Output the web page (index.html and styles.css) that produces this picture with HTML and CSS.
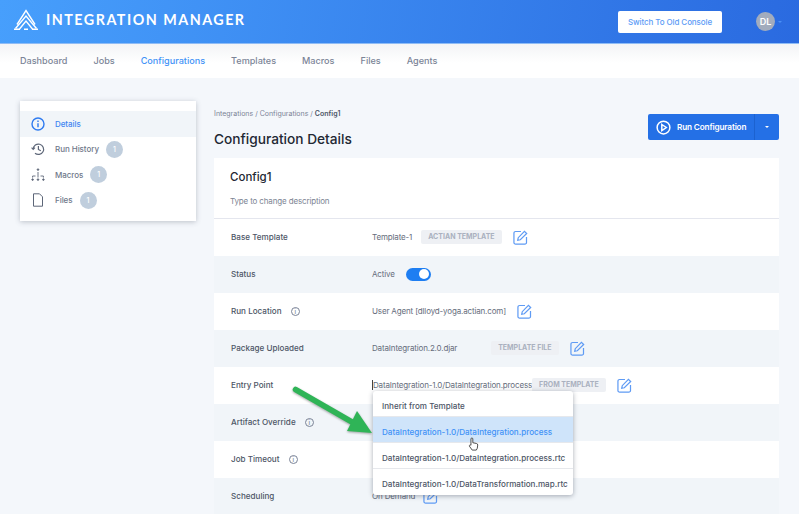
FILE: index.html
```html
<!DOCTYPE html>
<html lang="en">
<head>
    <meta charset="UTF-8">
    <title>Integration Manager</title>
    <link rel="stylesheet" href="styles.css">
</head>
<body>
    <header class="topbar">
        <div class="brand">
            <svg class="logo" width="24" height="21" viewBox="0 0 24 21" fill="none" stroke="#fff" stroke-width="1.4">
                <path d="M3 15.5 L12 1.5 L21 15.5"/>
                <path d="M1.5 19.5 L12 7 L22.5 19.5"/>
                <path d="M5.5 20 L12 12 L18.5 20"/>
                <path d="M0 20.2 H6 M18 20.2 H24 M10 20.2 H14"/>
            </svg>
            <span class="brand-name">INTEGRATION MANAGER</span>
        </div>
        <div class="top-right">
            <button class="old-console">Switch To Old Console</button>
            <div class="avatar">DL</div>
            <span class="caret caret-blue"></span>
        </div>
    </header>
    <nav class="tabs">
        <a>Dashboard</a>
        <a>Jobs</a>
        <a class="active">Configurations</a>
        <a>Templates</a>
        <a>Macros</a>
        <a>Files</a>
        <a>Agents</a>
    </nav>
    <div class="page">
        <aside class="side">
            <div class="side-item current">
                <svg width="14" height="14" viewBox="0 0 14 14" fill="none" stroke="#2f7bf0" stroke-width="1.4">
                    <circle cx="7" cy="7" r="6"/>
                    <path d="M7 6.2 V10.2 M7 3.6 V5"/>
                </svg>
                <span>Details</span>
            </div>
            <div class="side-item">
                <svg width="14" height="14" viewBox="0 0 14 14" fill="none" stroke="#5d6678" stroke-width="1.2">
                    <path d="M2.2 7 A5.2 5.2 0 1 1 4 11.2"/>
                    <path d="M0.6 5.6 L2.2 7.4 L3.9 5.6"/>
                    <path d="M7.4 4 V7.4 L9.8 8.8"/>
                </svg>
                <span>Run History</span>
                <b class="count">1</b>
            </div>
            <div class="side-item">
                <svg width="14" height="14" viewBox="0 0 14 14" fill="#5d6678" stroke="#5d6678" stroke-width="0.9">
                    <circle cx="7" cy="1.6" r="0.8"/>
                    <circle cx="1.6" cy="11.6" r="0.8"/>
                    <circle cx="7" cy="11.6" r="0.8"/>
                    <circle cx="12.4" cy="11.6" r="0.8"/>
                    <path d="M7 4 V9.5 M1.6 9.6 V8 H4.5 M12.4 9.6 V8 H9.5" fill="none"/>
                </svg>
                <span>Macros</span>
                <b class="count">1</b>
            </div>
            <div class="side-item">
                <svg width="14" height="14" viewBox="0 0 14 14" fill="none" stroke="#5d6678" stroke-width="1">
                    <path d="M2.5 0.8 H8.5 L11.5 3.8 V13.2 H2.5 Z"/>
                </svg>
                <span>Files</span>
                <b class="count">1</b>
            </div>
        </aside>
        <main class="main">
            <div class="main-head">
                <div>
                    <div class="crumbs">Integrations / Configurations / <strong>Config1</strong></div>
                    <h1>Configuration Details</h1>
                </div>
                <div class="run-btn">
                    <span class="run-label">
                        <svg width="15" height="15" viewBox="0 0 16 16" fill="none" stroke="#fff" stroke-width="1.6">
                            <circle cx="8" cy="8" r="6.8"/>
                            <path d="M6.2 4.8 L11 8 L6.2 11.2 Z"/>
                        </svg>
                        Run Configuration
                    </span>
                    <span class="run-more"><span class="caret"></span></span>
                </div>
            </div>
            <section class="card">
                <div class="card-title">
                    <h2>Config1</h2>
                    <p>Type to change description</p>
                </div>
                <div class="row">
                    <div class="label">Base Template</div>
                    <div class="value">
                        <span>Template-1</span>
                        <span class="tag tag-actian">ACTIAN TEMPLATE</span>
                        <svg class="edit" width="15" height="15" viewBox="0 0 16 16" fill="none" stroke="#5f9bf4" stroke-width="1.3"><path d="M8.5 1.6 H2.8 A1.8 1.8 0 0 0 1 3.4 V13.2 A1.8 1.8 0 0 0 2.8 15 H12.6 A1.8 1.8 0 0 0 14.4 13.2 V7.5"/><path d="M5 11 L5.6 8.2 L12.2 1.4 L14.6 3.7 L7.8 10.4 Z"/></svg>
                    </div>
                </div>
                <div class="row">
                    <div class="label">Status</div>
                    <div class="value">
                        <span>Active</span>
                        <span class="switch"><i></i></span>
                    </div>
                </div>
                <div class="row">
                    <div class="label">Run Location <span class="hint">i</span></div>
                    <div class="value">
                        <span>User Agent [dlloyd-yoga.actian.com]</span>
                        <svg class="edit" width="15" height="15" viewBox="0 0 16 16" fill="none" stroke="#5f9bf4" stroke-width="1.3"><path d="M8.5 1.6 H2.8 A1.8 1.8 0 0 0 1 3.4 V13.2 A1.8 1.8 0 0 0 2.8 15 H12.6 A1.8 1.8 0 0 0 14.4 13.2 V7.5"/><path d="M5 11 L5.6 8.2 L12.2 1.4 L14.6 3.7 L7.8 10.4 Z"/></svg>
                    </div>
                </div>
                <div class="row">
                    <div class="label">Package Uploaded</div>
                    <div class="value">
                        <span>DataIntegration.2.0.djar</span>
                        <span class="tag tag-file">TEMPLATE FILE</span>
                        <svg class="edit" width="15" height="15" viewBox="0 0 16 16" fill="none" stroke="#5f9bf4" stroke-width="1.3"><path d="M8.5 1.6 H2.8 A1.8 1.8 0 0 0 1 3.4 V13.2 A1.8 1.8 0 0 0 2.8 15 H12.6 A1.8 1.8 0 0 0 14.4 13.2 V7.5"/><path d="M5 11 L5.6 8.2 L12.2 1.4 L14.6 3.7 L7.8 10.4 Z"/></svg>
                    </div>
                </div>
                <div class="row">
                    <div class="label">Entry Point</div>
                    <div class="value">
                        <span class="typing">DataIntegration-1.0/DataIntegration.process</span>
                        <span class="tag tag-from">FROM TEMPLATE</span>
                        <svg class="edit" width="15" height="15" viewBox="0 0 16 16" fill="none" stroke="#5f9bf4" stroke-width="1.3"><path d="M8.5 1.6 H2.8 A1.8 1.8 0 0 0 1 3.4 V13.2 A1.8 1.8 0 0 0 2.8 15 H12.6 A1.8 1.8 0 0 0 14.4 13.2 V7.5"/><path d="M5 11 L5.6 8.2 L12.2 1.4 L14.6 3.7 L7.8 10.4 Z"/></svg>
                    </div>
                </div>
                <div class="row">
                    <div class="label">Artifact Override <span class="hint">i</span></div>
                </div>
                <div class="row">
                    <div class="label">Job Timeout <span class="hint">i</span></div>
                </div>
                <div class="row">
                    <div class="label">Scheduling</div>
                    <div class="value">
                        <span>On Demand</span>
                        <svg class="edit edit-sched" width="15" height="15" viewBox="0 0 16 16" fill="none" stroke="#5f9bf4" stroke-width="1.3"><path d="M8.5 1.6 H2.8 A1.8 1.8 0 0 0 1 3.4 V13.2 A1.8 1.8 0 0 0 2.8 15 H12.6 A1.8 1.8 0 0 0 14.4 13.2 V7.5"/><path d="M5 11 L5.6 8.2 L12.2 1.4 L14.6 3.7 L7.8 10.4 Z"/></svg>
                    </div>
                </div>
            </section>
        </main>
    </div>

    <!-- dropdown, arrow and hand sit over the rows -->
    <ul class="menu">
        <li>Inherit from Template</li>
        <li class="picked">DataIntegration-1.0/DataIntegration.process</li>
        <li>DataIntegration-1.0/DataIntegration.process.rtc</li>
        <li>DataIntegration-1.0/DataTransformation.map.rtc</li>
    </ul>
    <svg class="arrow" width="82" height="50" viewBox="0 0 82 50">
        <path d="M3.5 3.5 L60 36" stroke="#2fb457" stroke-width="5.5" stroke-linecap="round"/>
        <path d="M65 25 L80 47 L55 45 Z" fill="#2fb457"/>
    </svg>
    <svg class="hand" width="11" height="14" viewBox="0 0 13 16" fill="#fff" stroke="#333" stroke-width="1">
        <path d="M3.5 8 V2 A1.1 1.1 0 0 1 5.7 2 V6.5 L10 7.4 A1.8 1.8 0 0 1 11.5 9.2 L11 13 L9.8 15.2 H5 L1.6 10.5 A1.1 1.1 0 0 1 3.5 9.5 Z"/>
    </svg>
</body>
</html>
```

FILE: styles.css
```css
html, body {
    margin: 0;
    height: 514px;
    overflow: hidden;
}
body {
    position: relative;
    background-color: #f4f7fb;
    color: #4d5566;
    font-family: Inter, "Noto Sans", sans-serif;
    font-size: 8px;
}

/* top bar */
.topbar {
    height: 43px;
    box-sizing: border-box;
    padding: 0 17px 0 14px;
    display: flex;
    align-items: center;
    justify-content: space-between;
    background: linear-gradient(100deg, #479ffc, #2a6ae0);
}
.brand {
    display: flex;
    align-items: center;
    gap: 8px;
    margin-top: -5px;
}
.brand-name {
    color: #fff;
    font-family: Lato, sans-serif;
    font-size: 14.3px;
    font-weight: 700;
    letter-spacing: 1.5px;
}
.top-right {
    display: flex;
    align-items: center;
}
.old-console {
    width: 104px;
    height: 22px;
    padding: 0;
    border: none;
    border-radius: 2px;
    background: #fff;
    color: #5c9bf6;
    font-family: Inter, sans-serif;
    font-size: 8px;
    font-weight: 500;
    letter-spacing: -0.1px;
}
.avatar {
    width: 19px;
    height: 19px;
    margin-left: 34px;
    border-radius: 50%;
    background: #a2acbd;
    color: #fff;
    font-size: 9px;
    font-weight: 600;
    line-height: 19px;
    text-align: center;
}
.caret {
    display: inline-block;
    border-left: 2.5px solid transparent;
    border-right: 2.5px solid transparent;
    border-top: 2.5px solid #fff;
}
.caret-blue {
    margin-left: 3px;
    border-top-color: #4a90f5;
}

/* nav tabs */
.tabs {
    height: 35px;
    box-sizing: border-box;
    padding: 0 20px 1px;
    display: flex;
    align-items: center;
    gap: 26px;
    background: linear-gradient(#f3f4f6, #fff 55%);
    border-top: 1px solid #8fbcf5;
    font-size: 9.1px;
    font-weight: 500;
    color: #7b8497;
}
.tabs .active {
    color: #3f92f7;
}

.page {
    display: flex;
    align-items: flex-start;
    padding: 23px 20px 0;
    gap: 18px;
}

/* left menu */
.side {
    width: 176px;
    flex: none;
    box-sizing: border-box;
    height: 120px;
    padding: 10px 0;
    background: #fff;
    box-shadow: 0 1px 5px rgba(60, 70, 90, 0.3);
}
.side-item {
    height: 25.5px;
    padding-left: 11px;
    display: flex;
    align-items: center;
    font-weight: 500;
    letter-spacing: -0.05px;
    color: #6f788a;
}
.side-item svg {
    flex: none;
    margin-right: 10px;
}
.side-item.current {
    background: #f1f5f9;
    color: #3f86f2;
}
.count {
    width: 17px;
    height: 17px;
    margin-left: 7px;
    border-radius: 50%;
    background: #c0cedd;
    color: #fff;
    font-size: 7px;
    font-weight: 500;
    line-height: 17px;
    text-align: center;
}

/* main column */
.main {
    flex: 1;
    min-width: 0;
}
.main-head {
    height: 57px;
    display: flex;
    justify-content: space-between;
}
.crumbs {
    padding-top: 8px;
    font-size: 7px;
    color: #7b8497;
}
.crumbs strong {
    font-weight: 600;
    color: #4d5566;
}
h1 {
    margin: 13px 0 0;
    font-size: 13.7px;
    font-weight: 500;
    color: #222833;
}
.run-btn {
    width: 131px;
    height: 26px;
    margin-top: 13px;
    display: flex;
    border-radius: 2px;
    background: #2470e6;
    color: #fff;
    font-size: 8.2px;
    font-weight: 600;
    letter-spacing: -0.15px;
}
.run-label {
    flex: 1;
    display: flex;
    align-items: center;
    gap: 6px;
    padding-left: 8px;
}
.run-more {
    width: 24px;
    display: flex;
    align-items: center;
    justify-content: center;
    border-left: 1px solid #1c62d0;
}

/* details card */
.card {
    background: #fff;
}
.card-title {
    height: 61px;
    box-sizing: border-box;
    padding: 12px 16px 0;
    border-bottom: 1px solid #e4e6ee;
}
h2 {
    margin: 0;
    font-size: 11.5px;
    font-weight: 500;
    color: #222833;
}
.card-title p {
    margin: 12px 0 0;
    font-size: 8px;
    letter-spacing: -0.15px;
    color: #7d8493;
}
.row {
    height: 37px;
    box-sizing: border-box;
    padding-left: 17px;
    padding-bottom: 1px;
    display: flex;
    align-items: center;
}
.row:nth-of-type(odd) {
    background: #f1f5f9;
}
.label {
    width: 141px;
    flex: none;
    font-size: 8.1px;
    font-weight: 500;
    color: #4d5566;
}
.hint {
    display: inline-block;
    width: 7px;
    height: 7px;
    margin-left: 7px;
    border: 1px solid #7b8497;
    border-radius: 50%;
    font-size: 6px;
    line-height: 7px;
    text-align: center;
    color: #7b8497;
}
.value {
    display: flex;
    align-items: center;
    font-size: 8px;
    letter-spacing: -0.15px;
    color: #666d7c;
}
.tag {
    height: 14px;
    padding: 0 7px;
    border-radius: 2px;
    background: #eef0f4;
    color: #aab1bf;
    font-size: 7px;
    font-weight: 700;
    letter-spacing: 0;
    line-height: 14px;
}
.tag-actian { margin-left: 9px; }
.tag-file { margin-left: 34px; }
.tag-from { margin-left: 0; }
.edit { margin-left: 11px; }
.edit-sched { margin-left: 8px; }
.typing {
    border-left: 1px solid #444;
}
.switch {
    width: 25px;
    height: 13px;
    margin-left: 11px;
    border-radius: 7px;
    background: #1e7ef2;
    position: relative;
}
.switch i {
    position: absolute;
    top: 1.5px;
    right: 2px;
    width: 10px;
    height: 10px;
    border-radius: 50%;
    background: #fff;
}

/* entry point dropdown */
.menu {
    position: absolute;
    left: 373px;
    top: 391px;
    width: 200px;
    margin: 0;
    padding: 0;
    list-style: none;
    background: #fff;
    border-radius: 3px;
    box-shadow: 0 1px 5px rgba(40, 50, 70, 0.4);
    font-size: 8.1px;
    font-weight: 500;
    color: #4d5566;
}
.menu li {
    height: 26px;
    padding: 4px 0 0 9px;
    display: flex;
    align-items: center;
    white-space: nowrap;
    box-sizing: border-box;
    border-bottom: 1px solid #e6e8ec;
}
.menu li:last-child {
    border-bottom: none;
}
.menu .picked {
    background: #cfe4fa;
    color: #3f92f7;
}
.arrow {
    position: absolute;
    left: 292px;
    top: 386px;
    filter: drop-shadow(0 1px 1px rgba(0, 0, 0, 0.35));
}
.hand {
    position: absolute;
    left: 468px;
    top: 437px;
}
```
